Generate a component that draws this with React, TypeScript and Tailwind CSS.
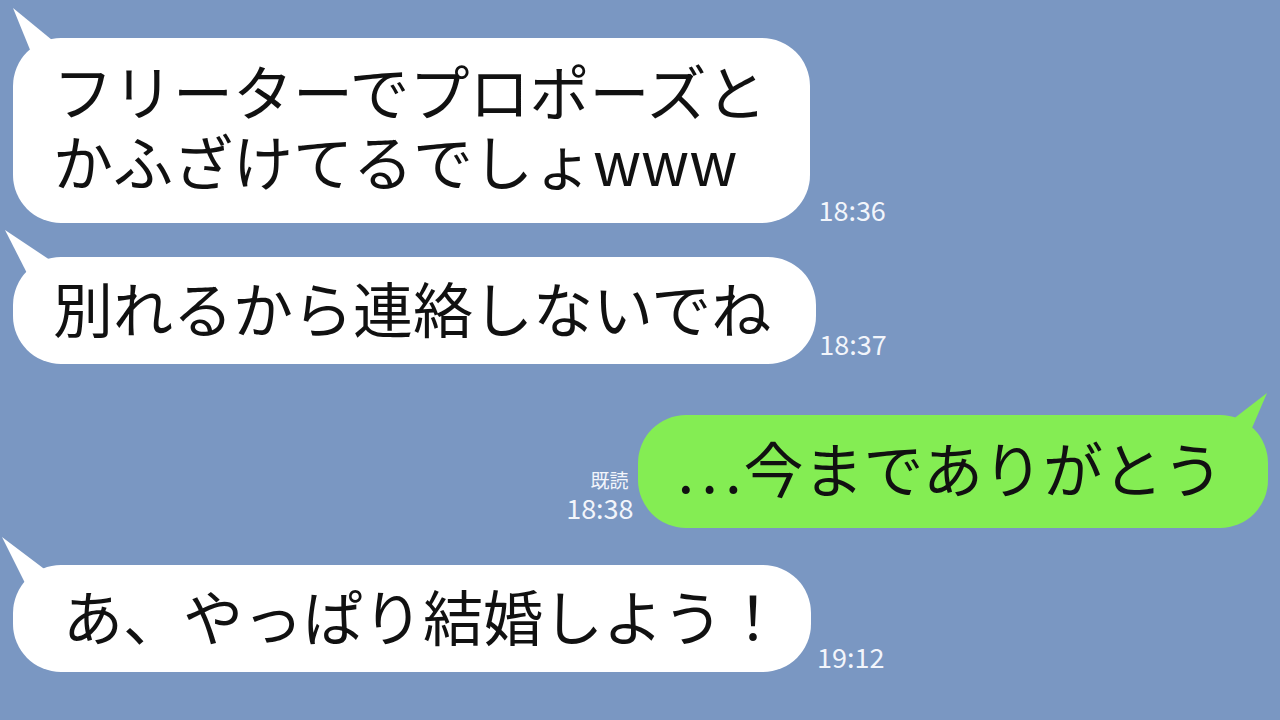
import React from "react";

const JP = { fontFamily: '"Noto Sans CJK JP", "Noto Sans", sans-serif' };

function LeftTail({ pts }: { pts: string }) {
  return (
    <svg className="absolute left-0 top-0 overflow-visible" width="1" height="1">
      <polygon points={pts} fill="#ffffff" />
    </svg>
  );
}

export default function App() {
  return (
    <div
      className="w-[1280px] h-[720px] bg-[#7a97c2] overflow-hidden flex flex-col pt-[38px] text-[#111111]"
      style={JP}
    >
      {/* Message 1 */}
      <div className="flex items-end pl-[13px]">
        <div className="relative bg-white rounded-[48px] pl-[40px] pr-[44px] pt-[17px] pb-[28px] text-[60px] leading-[70px] whitespace-nowrap">
          <LeftTail pts="0,-30 39,2 47,10 47,24 22,24" />
          <div>フリーターでプロポーズと</div>
          <div>かふざけてるでしょwww</div>
        </div>
        <div className="ml-[8px] mb-[0px] text-[27px] leading-[27px] text-[#f2f5fb]">18:36</div>
      </div>

      {/* Message 2 */}
      <div className="flex items-end pl-[13px] mt-[34px]">
        <div className="relative bg-white rounded-[48px] pl-[40px] pr-[45px] pt-[15px] pb-[22px] text-[60px] leading-[70px] whitespace-nowrap">
          <LeftTail pts="-8,-27 37,3 45,10 45,26 19,26" />
          別れるから連絡しないでね
        </div>
        <div className="ml-[3px] mb-[7px] text-[27px] leading-[27px] text-[#f2f5fb]">18:37</div>
      </div>

      {/* Message 3 (mine) */}
      <div className="flex items-end justify-end pr-[12px] mt-[51px]">
        <div className="flex flex-col items-end mr-[4px] mb-[7px] text-[#f2f5fb]">
          <div className="text-[19px] leading-[19px] mr-[5px]">既読</div>
          <div className="text-[27px] leading-[27px] mt-[5px]">18:38</div>
        </div>
        <div className="relative bg-[#84ed53] rounded-[48px] pl-[40px] pr-[45px] pt-[17px] pb-[26px] text-[60px] leading-[70px] whitespace-nowrap">
          <svg className="absolute right-0 top-0 overflow-visible" width="1" height="1">
            <polygon points="0,-22 -18,20 -42,20 -40,8 -35,5" fill="#84ed53" />
          </svg>
          <span className="inline-block w-[66px] tracking-[7px]">...</span>
          今までありがとう
        </div>
      </div>

      {/* Message 4 */}
      <div className="flex items-end pl-[13px] mt-[37px]">
        <div className="relative bg-white rounded-[48px] pl-[50px] pr-[28px] pt-[15px] pb-[22px] text-[60px] leading-[70px] whitespace-nowrap">
          <LeftTail pts="-11,-28 30,3 40,10 40,26 16,26" />
          あ、やっぱり結婚しよう！
        </div>
        <div className="ml-[6px] mb-[2px] text-[27px] leading-[27px] text-[#f2f5fb]">19:12</div>
      </div>
    </div>
  );
}
